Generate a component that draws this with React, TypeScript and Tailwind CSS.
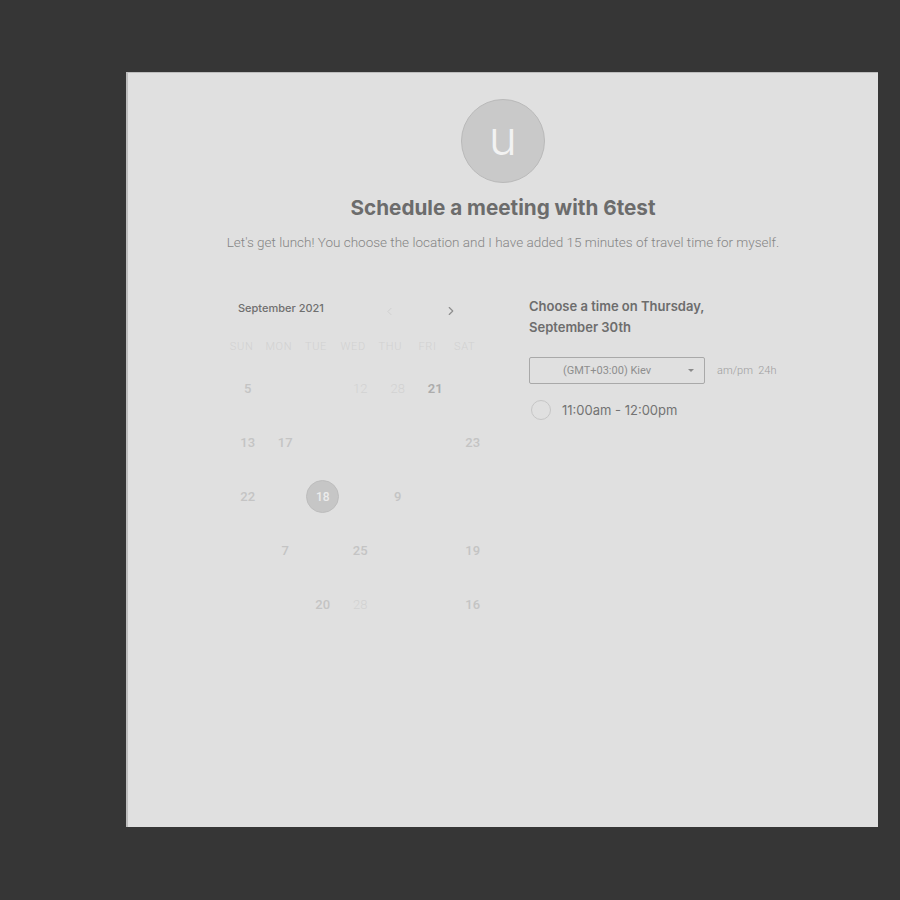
import { ChevronLeft, ChevronRight } from "lucide-react";

const days = ["SUN", "MON", "TUE", "WED", "THU", "FRI", "SAT"];

// sparse month grid: [row][col] -> label + tone
type Cell = { n: string; tone: "mid" | "strong" | "faint" | "sel" } | null;

const weeks: Cell[][] = [
  [{ n: "5", tone: "mid" }, null, null, { n: "12", tone: "faint" }, { n: "28", tone: "faint" }, { n: "21", tone: "strong" }, null],
  [{ n: "13", tone: "mid" }, { n: "17", tone: "mid" }, null, null, null, null, { n: "23", tone: "mid" }],
  [{ n: "22", tone: "mid" }, null, { n: "18", tone: "sel" }, null, { n: "9", tone: "mid" }, null, null],
  [null, { n: "7", tone: "mid" }, null, { n: "25", tone: "mid" }, null, null, { n: "19", tone: "mid" }],
  [null, null, { n: "20", tone: "mid" }, { n: "28", tone: "faint" }, null, null, { n: "16", tone: "mid" }],
];

const toneClass = {
  mid: "text-[#c4c4c4] font-medium",
  strong: "text-[#acacac] font-semibold",
  faint: "text-[#d2d2d2] font-light",
  sel: "",
};

function Calendar() {
  return (
    <div className="w-[270px]" style={{ fontFamily: "Roboto, 'Liberation Sans', sans-serif" }}>
      <div className="flex items-center h-[24px] pl-[15px] mt-[6px]">
        <span className="text-[11px] font-medium text-[#6f6f6f] w-[145px]" style={{ fontFamily: "Inter, sans-serif" }}>
          September 2021
        </span>
        <ChevronLeft className="w-[13px] h-[13px] text-[#cbcbcb] mt-[6px]" strokeWidth={1.5} />
        <span className="w-[48px]" />
        <ChevronRight className="w-[14px] h-[14px] text-[#8e8e8e] mt-[6px]" strokeWidth={2} />
      </div>

      <div className="grid grid-cols-[repeat(7,37.2px)] mt-[17px] h-[20px] items-center">
        {days.map((d) => (
          <span key={d} className="text-center text-[11px] font-light tracking-[0.06em] text-[#d1d1d1]">
            {d}
          </span>
        ))}
      </div>

      <div className="grid grid-cols-[repeat(7,37.5px)] grid-rows-[repeat(5,53.8px)] mt-[5px] pl-[6px]">
        {weeks.flat().map((c, i) => (
          <div key={i} className="flex items-center justify-center text-[13px]">
            {c &&
              (c.tone === "sel" ? (
                <span className="w-[33px] h-[33px] rounded-full bg-[#c6c6c6] border border-[#bdbdbd] flex items-center justify-center text-[12px] font-medium text-[#ececec]">
                  {c.n}
                </span>
              ) : (
                <span className={toneClass[c.tone]}>{c.n}</span>
              ))}
          </div>
        ))}
      </div>
    </div>
  );
}

function TimePicker() {
  return (
    <div className="w-[250px] pt-[6px]" style={{ fontFamily: "Roboto, 'Liberation Sans', sans-serif" }}>
      <h2
        className="text-[13px] leading-[21px] font-semibold text-[#6d6d6d]"
        style={{ fontFamily: "Inter, sans-serif" }}
      >
        Choose a time on Thursday,
        <br />
        September 30th
      </h2>

      <div className="flex items-center mt-[19px]">
        <div className="w-[176px] h-[27px] border border-[#a9a9a9] rounded-[2px] flex items-center pl-[33px] pr-[10px]">
          <span className="text-[11px] text-[#8e8e8e] flex-1">(GMT+03:00) Kiev</span>
          <span className="w-0 h-0 border-l-[3px] border-r-[3px] border-t-[3px] border-l-transparent border-r-transparent border-t-[#8a8a8a]" />
        </div>
        <span className="ml-[12px] text-[11px] text-[#9e9e9e] font-light">am/pm&nbsp;&nbsp;24h</span>
      </div>

      <div className="flex items-center mt-[16px] pl-[2px]">
        <span className="w-[20px] h-[20px] rounded-full border border-[#c6c6c6]" />
        <span className="ml-[11px] text-[13px] text-[#737373]" style={{ fontFamily: "Inter, sans-serif" }}>
          11:00am - 12:00pm
        </span>
      </div>
    </div>
  );
}

export default function App() {
  return (
    <div className="min-h-[900px] bg-[#363636] pt-[72px] pl-[126px]">
      <div className="w-[752px] h-[755px] bg-[#e0e0e0] border-l-2 border-t border-[#bdbdbd] flex flex-col items-center pt-[26px]">
        <div className="w-[84px] h-[84px] rounded-full bg-[#c9c9c9] border border-[#b9b9b9] flex items-center justify-center">
          <span
            className="text-[48px] leading-none text-[#f2f2f2] font-light -mt-[6px]"
            style={{ fontFamily: "Inter, sans-serif" }}
          >
            u
          </span>
        </div>

        <h1
          className="mt-[11px] text-[20.7px] font-bold text-[#6c6c6c] leading-[28px]"
          style={{ fontFamily: "Inter, sans-serif" }}
        >
          Schedule a meeting with 6test
        </h1>
        <p
          className="mt-[10px] text-[13.5px] font-light text-[#858585]"
          style={{ fontFamily: "Roboto, 'Liberation Sans', sans-serif" }}
        >
          Let's get lunch! You choose the location and I have added 15 minutes of travel time for myself.
        </p>

        <div className="flex w-full mt-[38px] pl-[95px]">
          <Calendar />
          <div className="ml-[36px]">
            <TimePicker />
          </div>
        </div>
      </div>
    </div>
  );
}
